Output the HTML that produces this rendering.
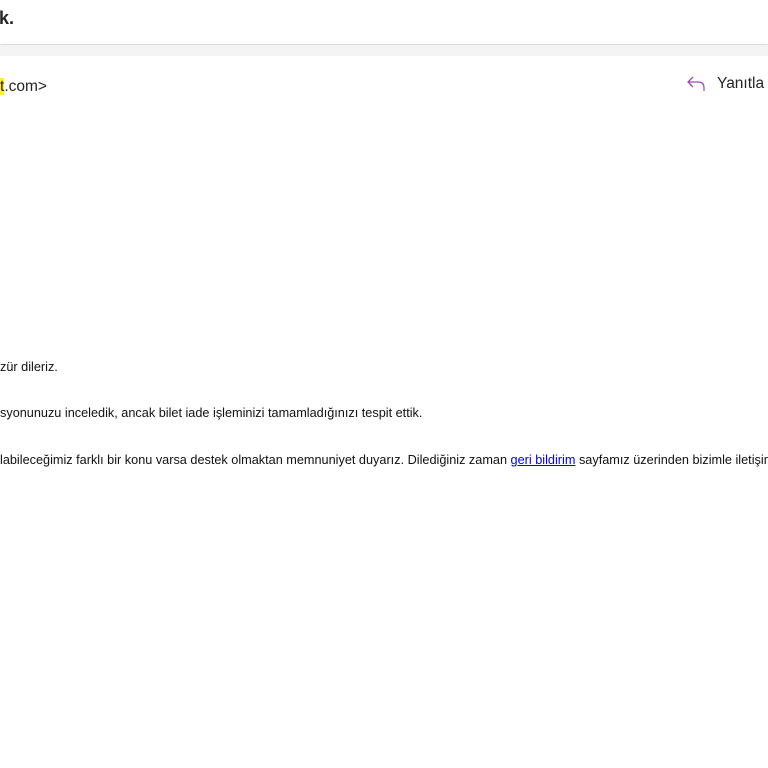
<!DOCTYPE html><html><head><style>
body{margin:0;width:768px;height:768px;overflow:hidden;background:#fff;font-family:"Liberation Sans",sans-serif;position:relative}
.t{position:absolute;white-space:nowrap}
</style></head><body>
<div style="position:absolute;left:0;top:0;width:768px;height:44px;background:#fff;box-shadow:0 1px 3px rgba(0,0,0,.25)"></div>
<div style="position:absolute;left:0;top:45px;width:768px;height:11px;background:#f4f4f4"></div>
<div class="t" style="left:-1px;top:8px;font-size:18px;color:#242424;font-weight:bold">k.</div>
<div class="t" style="left:0;top:78px;font-size:15.5px;color:#242424"><span style="background:#ffef2c">t</span>.com&gt;</div>
<svg style="position:absolute;left:685px;top:74px" width="22" height="20" viewBox="0 0 22 20"><path d="M8 3 L3 8 L8 13 M3 8 H13 Q19 8 19 14 V17" fill="none" stroke="#a04bb0" stroke-width="1.3"/></svg>
<div class="t" style="left:717px;top:75px;font-size:15.5px;color:#242424">Yanıtla</div>
<div class="t" style="left:0;top:360px;font-size:12.7px;color:#111">zür dileriz.</div>
<div class="t" style="left:0;top:406px;font-size:12.7px;color:#111">syonunuzu inceledik, ancak bilet iade işleminizi tamamladığınızı tespit ettik.</div>
<div class="t" style="left:0;top:453px;font-size:12.7px;color:#111">labileceğimiz farklı bir konu varsa destek olmaktan memnuniyet duyarız. Dilediğiniz zaman <a style="color:#0000ee;text-decoration:underline">geri bildirim</a> sayfamız üzerinden bizimle iletişim</div>
</body></html>
